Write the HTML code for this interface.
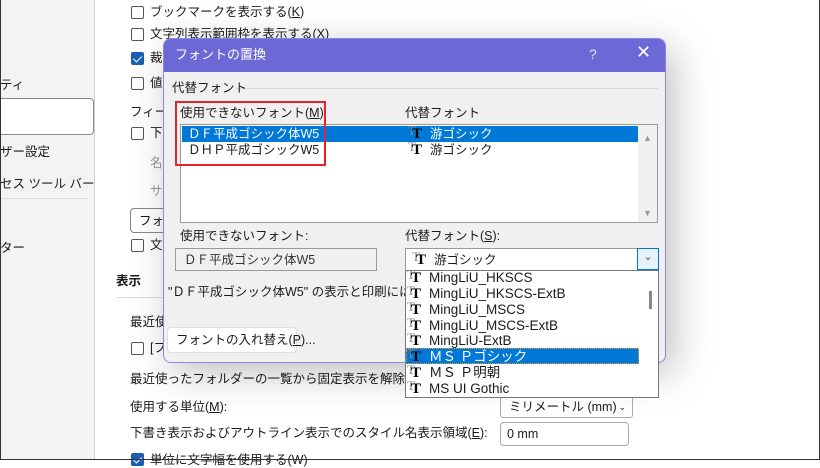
<!DOCTYPE html>
<html><head><meta charset="utf-8"><style>
*{margin:0;padding:0;box-sizing:border-box}
body{width:820px;height:460px;overflow:hidden;background:#fff;font-family:"Liberation Sans","Noto Sans CJK JP",sans-serif;font-size:12.5px;color:#1a1a1a;position:relative}
.a{position:absolute;white-space:nowrap;line-height:16px}
.cb{position:absolute;width:13px;height:13px;border:1px solid #555;border-radius:2px;background:#fff}
.cb.on{background:#1a5fb4;border-color:#1a5fb4}
.cb.on:after{content:"";position:absolute;left:3px;top:1px;width:4px;height:7px;border:solid #fff;border-width:0 1.5px 1.5px 0;transform:rotate(45deg)}
.tt{display:inline-block;position:relative;width:22px;height:14px;vertical-align:-2px;font-family:"Liberation Serif",serif;font-weight:bold;font-size:15px;line-height:14px}
.tt b{position:absolute;left:4px;top:1px;color:#000}
.tt i{position:absolute;left:0;top:-2px;font-style:normal;color:#888;font-weight:normal;font-size:13px}
.sel .tt b{color:#000}
.dd{font-size:13.5px}
</style></head><body>
<!-- sidebar -->
<div class="a" style="left:0;top:0;width:95px;height:460px;background:#f3f3f3;border-right:1px solid #d0d0d0"></div>
<div class="a" style="left:0;top:77px">ティ</div>
<div class="a" style="left:-4px;top:98px;width:98px;height:37px;background:#fff;border:1px solid #888;border-radius:4px"></div>
<div class="a" style="left:0;top:144px">ザー設定</div>
<div class="a" style="left:0;top:176px">セス ツール バー</div>
<div class="a" style="left:0;top:198px;width:88px;height:1px;background:#ddd"></div>
<div class="a" style="left:0;top:240px">ター</div>
<!-- main -->
<div class="cb" style="left:131px;top:6px"></div><div class="a" style="left:150px;top:4px">ブックマークを表示する(<u>K</u>)</div>
<div class="cb" style="left:131px;top:28px"></div><div class="a" style="left:150px;top:26px">文字列表示範囲枠を表示する(X)</div>
<div class="cb on" style="left:131px;top:52px"></div><div class="a" style="left:150px;top:50px">裁</div>
<div class="cb" style="left:131px;top:77px"></div><div class="a" style="left:150px;top:75px">値</div>
<div class="a" style="left:130px;top:104px">フィール</div>
<div class="cb" style="left:131px;top:127px"></div><div class="a" style="left:150px;top:125px">下</div>
<div class="a" style="left:150px;top:155px;color:#999">名</div>
<div class="a" style="left:150px;top:183px;color:#999">サ</div>
<div class="a" style="left:130px;top:208px;width:60px;height:25px;border:1px solid #888;border-radius:4px;padding:4px 8px">フォン</div>
<div class="cb" style="left:131px;top:239px"></div><div class="a" style="left:150px;top:237px">文</div>
<div class="a" style="left:116px;top:273px;font-weight:bold">表示</div>
<div class="a" style="left:116px;top:297px;width:520px;height:1px;background:#ddd"></div>
<div class="a" style="left:130px;top:314px">最近使</div>
<div class="cb" style="left:131px;top:342px"></div><div class="a" style="left:150px;top:340px">[フ</div>
<div class="a" style="left:130px;top:371px">最近使ったフォルダーの一覧から固定表示を解除するフ</div>
<div class="a" style="left:130px;top:399px">使用する単位(<u>M</u>):</div>
<div class="a" style="left:500px;top:396px;width:133px;height:22px;border:1px solid #aaa;border-radius:3px;padding:2px 8px;background:#fff">ミリメートル (mm)<span style="position:absolute;right:6px;top:2px;font-size:9px">⌄</span></div>
<div class="a" style="left:130px;top:425px">下書き表示およびアウトライン表示でのスタイル名表示領域(<u>E</u>):</div>
<div class="a" style="left:500px;top:422px;width:129px;height:24px;border:1px solid #aaa;border-radius:4px;padding:3px 6px;background:#fff">0 mm</div>
<div class="cb on" style="left:131px;top:453px"></div><div class="a" style="left:150px;top:452px">単位に文字幅を使用する(W)</div>
<!-- dialog -->
<div class="a" style="left:163px;top:38px;width:503px;height:325px;background:#f0f0f0;border:1px solid #8b86e0;border-radius:8px;box-shadow:8px 10px 40px rgba(0,0,0,.25);overflow:hidden">
 <div style="position:absolute;left:0;top:0;width:100%;height:33px;background:#6c68d6"></div>
</div>
<div class="a" style="left:175px;top:47px;color:#fff;font-size:13px">フォントの置換</div>
<div class="a" style="left:589px;top:46px;color:#e0e0ff;font-size:14px">?</div>
<div class="a" style="left:636px;top:44px;color:#fff;font-size:18px">✕</div>
<div class="a" style="left:236px;top:88px;width:422px;height:1px;background:#d8d8d8"></div>
<div class="a" style="left:172px;top:80px">代替フォント</div>
<div class="a" style="left:180px;top:105px">使用できないフォント(<u>M</u>)</div>
<div class="a" style="left:405px;top:105px">代替フォント</div>
<div class="a" style="left:180px;top:124px;width:478px;height:99px;background:#fff;border:1px solid #999"></div>
<div class="a" style="left:182px;top:126px;width:456px;height:16px;background:#0078d7"></div>
<div class="a" style="left:638px;top:125px;width:19px;height:97px;background:#f0f0f0"></div>
<div class="a" style="left:643px;top:130px;color:#999;font-size:9px">▲</div>
<div class="a" style="left:643px;top:205px;color:#999;font-size:9px">▼</div>
<div class="a" style="left:188px;top:126px;color:#fff">ＤＦ平成ゴシック体W5</div>
<div class="a" style="left:188px;top:142px">ＤＨＰ平成ゴシックW5</div>
<div class="a sel" style="left:408px;top:126px;color:#fff"><span class="tt"><i>T</i><b>T</b></span>游ゴシック</div>
<div class="a" style="left:408px;top:142px"><span class="tt"><i>T</i><b>T</b></span>游ゴシック</div>
<div class="a" style="left:175px;top:101px;width:151px;height:65px;border:2px solid #e0262c"></div>
<div class="a" style="left:180px;top:228px">使用できないフォント:</div>
<div class="a" style="left:405px;top:228px">代替フォント(<u>S</u>):</div>
<div class="a" style="left:175px;top:248px;width:202px;height:23px;border:1px solid #999;padding:3px 8px;color:#333">ＤＦ平成ゴシック体W5</div>
<div class="a" style="left:405px;top:248px;width:254px;height:23px;border:1px solid #999;background:#fff;padding:3px 6px"><span class="tt"><i>T</i><b>T</b></span>游ゴシック</div>
<div class="a" style="left:637px;top:248px;width:22px;height:22px;border:1px solid #0078d7;background:#e5f1fb;color:#555;text-align:center;font-size:11px">⌄</div>
<div class="a" style="left:168px;top:284px">"ＤＦ平成ゴシック体W5" の表示と印刷には "フ</div>
<div class="a" style="left:167px;top:327px;width:130px;height:26px;border:1px solid #ddd;border-radius:4px;background:#fff;padding:4px 8px">フォントの入れ替え(<u>P</u>)...</div>
<!-- dropdown -->
<div class="a" style="left:405px;top:270px;width:254px;height:128px;background:#fff;border:1px solid #777"></div>
<div class="a" style="left:649px;top:291px;width:3px;height:18px;background:#888"></div>
<div class="a" style="left:406px;top:348px;width:233px;height:16px;background:#0078d7;border:1px dotted #f0a020"></div>
<div class="a dd" style="left:407px;top:270px"><span class="tt"><i>T</i><b>T</b></span>MingLiU_HKSCS</div>
<div class="a dd" style="left:407px;top:286px"><span class="tt"><i>T</i><b>T</b></span>MingLiU_HKSCS-ExtB</div>
<div class="a dd" style="left:407px;top:302px"><span class="tt"><i>T</i><b>T</b></span>MingLiU_MSCS</div>
<div class="a dd" style="left:407px;top:318px"><span class="tt"><i>T</i><b>T</b></span>MingLiU_MSCS-ExtB</div>
<div class="a dd" style="left:407px;top:333px"><span class="tt"><i>T</i><b>T</b></span>MingLiU-ExtB</div>
<div class="a dd sel" style="left:407px;top:349px;color:#fff"><span class="tt"><i>T</i><b>T</b></span>ＭＳ Ｐゴシック</div>
<div class="a dd" style="left:407px;top:365px"><span class="tt"><i>T</i><b>T</b></span>ＭＳ Ｐ明朝</div>
<div class="a dd" style="left:407px;top:381px"><span class="tt"><i>T</i><b>T</b></span>MS UI Gothic</div>
<!-- frame -->
<div class="a" style="left:0;top:0;width:820px;height:460px;border:1px solid #333;border-top:none"></div>
</body></html>
